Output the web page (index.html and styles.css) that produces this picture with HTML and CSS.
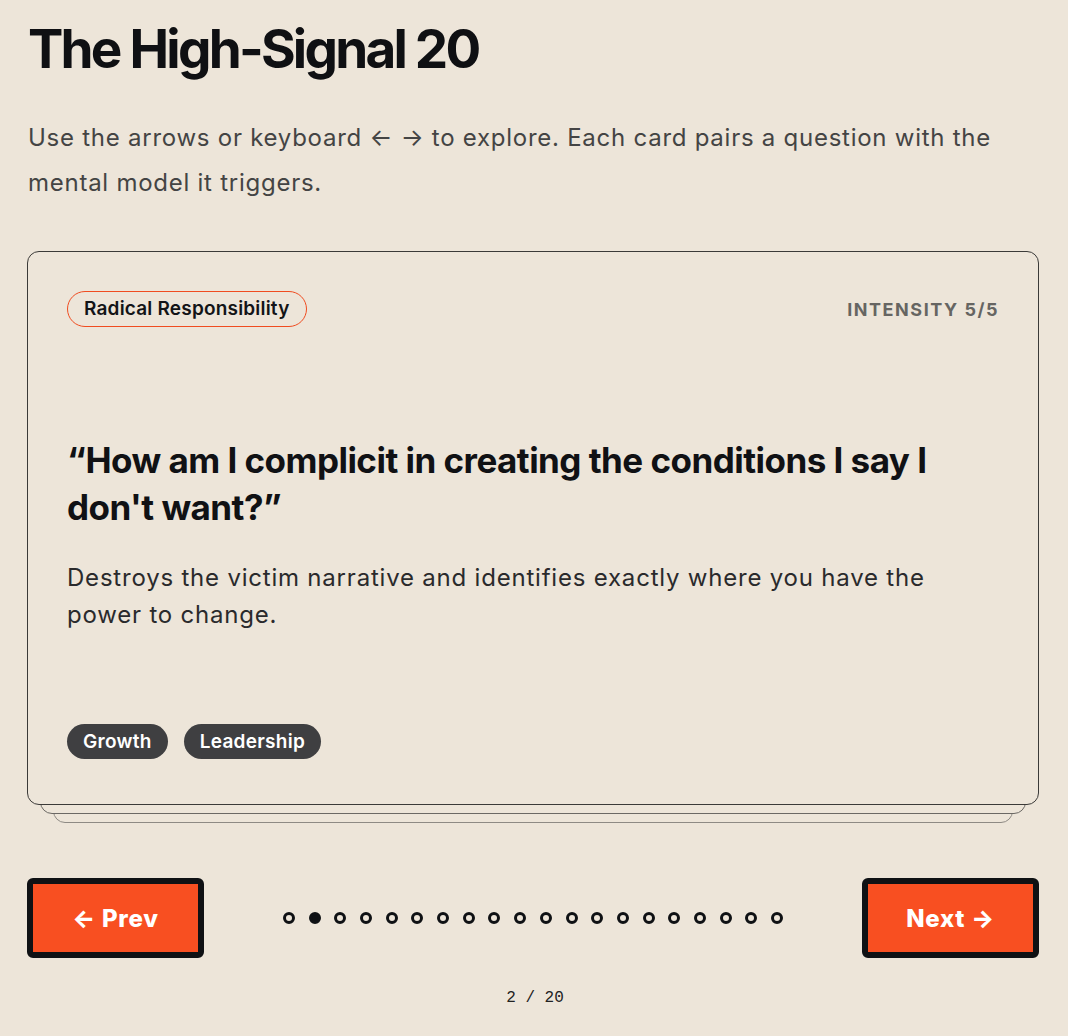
FILE: index.html
```html
<!DOCTYPE html>
<html>
<head>
<meta charset="utf-8">
<link rel="stylesheet" href="styles.css">
</head>
<body>
<main class="page">
  <h1 class="title">The High-Signal 20</h1>
  <p class="intro">Use the arrows or keyboard ← → to explore. Each card pairs a question with the mental model it triggers.</p>

  <div class="deck">
    <div class="layer layer-3"></div>
    <div class="layer layer-2"></div>
    <article class="card">
      <div class="card-head">
        <span class="model">Radical Responsibility</span>
        <span class="intensity">Intensity 5/5</span>
      </div>
      <div class="card-body">
        <h2 class="question">“How am I complicit in creating the conditions I say I don't want?”</h2>
        <p class="why">Destroys the victim narrative and identifies exactly where you have the power to change.</p>
      </div>
      <div class="tags">
        <span class="tag">Growth</span>
        <span class="tag">Leadership</span>
      </div>
    </article>
  </div>

  <nav class="controls">
    <button class="btn">← Prev</button>
    <div class="dots">
      <span class="dot"></span><span class="dot active"></span><span class="dot"></span><span class="dot"></span><span class="dot"></span><span class="dot"></span><span class="dot"></span><span class="dot"></span><span class="dot"></span><span class="dot"></span><span class="dot"></span><span class="dot"></span><span class="dot"></span><span class="dot"></span><span class="dot"></span><span class="dot"></span><span class="dot"></span><span class="dot"></span><span class="dot"></span><span class="dot"></span>
    </div>
    <button class="btn">Next →</button>
  </nav>
  <div class="counter">2 / 20</div>
</main>
</body>
</html>
```
FILE: styles.css
```css
* { box-sizing: border-box; }
html, body { margin: 0; padding: 0; }
body {
  background: #ede5d9;
  font-family: Inter, "Noto Sans", sans-serif;
  color: #111215;
}
.page {
  padding: 0 29px 0 27px;
}
.title {
  margin: 0;
  padding-top: 18px;
  padding-left: 1px;
  font-size: 53px;
  line-height: 62px;
  font-weight: 700;
  letter-spacing: -0.052em;
  color: #0f1013;
}
.intro {
  margin: 35px 0 0 1px;
  font-size: 24px;
  line-height: 45px;
  letter-spacing: 0.031em;
  color: #444444;
  max-width: 990px;
}
.deck {
  position: relative;
  margin-top: 46px;
}
.layer {
  position: absolute;
  top: 0;
  bottom: 0;
  border-radius: 12px;
  background: #ede5d9;
}
.layer-2 {
  left: 13px;
  right: 13px;
  transform: translateY(9px);
  border: 1px solid #6b6864;
}
.layer-3 {
  left: 26px;
  right: 26px;
  transform: translateY(18px);
  border: 1px solid #8e8a84;
}
.card {
  position: relative;
  height: 554px;
  border: 1px solid #3b3a38;
  border-radius: 12px;
  background: #ede5d9;
  padding: 39px 39px 45px 39px;
  display: flex;
  flex-direction: column;
}
.card-head {
  display: flex;
  justify-content: space-between;
  align-items: center;
}
.model {
  display: inline-block;
  height: 36px;
  line-height: 34px;
  padding: 0 16px;
  border: 1px solid #f04c20;
  border-radius: 18px;
  font-size: 19px;
  font-weight: 600;
  letter-spacing: 0.01em;
  color: #131417;
}
.intensity {
  font-size: 18px;
  font-weight: 700;
  letter-spacing: 0.085em;
  text-transform: uppercase;
  color: #666562;
}
.card-body {
  flex: 1;
  padding-top: 110px;
}
.question {
  margin: 0;
  font-size: 35px;
  line-height: 47px;
  font-weight: 700;
  letter-spacing: -0.015em;
  color: #101114;
  max-width: 900px;
}
.why {
  margin: 28px 0 0 0;
  font-size: 24px;
  line-height: 37px;
  letter-spacing: 0.033em;
  color: #2a2a2c;
  max-width: 900px;
}
.tags {
  display: flex;
  gap: 16px;
}
.tag {
  display: inline-block;
  height: 35px;
  line-height: 35px;
  padding: 0 16px;
  border-radius: 18px;
  background: #3f3f41;
  color: #ffffff;
  font-size: 19px;
  font-weight: 600;
  letter-spacing: 0.015em;
}
.controls {
  display: flex;
  justify-content: space-between;
  align-items: center;
  margin-top: 73px;
}
.btn {
  width: 177px;
  height: 80px;
  border: 6px solid #0f1114;
  border-radius: 6px;
  background: #f84f21;
  color: #ffffff;
  font-family: Inter, "Noto Sans", sans-serif;
  font-size: 24px;
  font-weight: 800;
  letter-spacing: 0.03em;
  padding: 0;
}
.dots {
  display: flex;
  gap: 13.7px;
}
.dot {
  width: 12px;
  height: 12px;
  border: 3px solid #0f1114;
  border-radius: 50%;
}
.dot.active {
  background: #0f1114;
}
.counter {
  margin-top: 31px;
  text-align: center;
  font-family: "Liberation Mono", monospace;
  font-size: 16px;
  color: #222222;
  padding-left: 4px;
}
```
